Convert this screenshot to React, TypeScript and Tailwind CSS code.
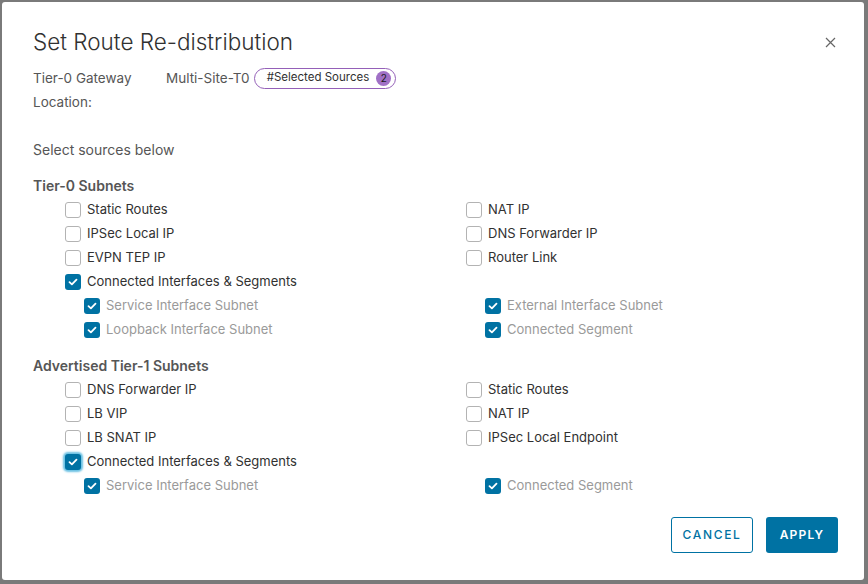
import React from 'react';

type Item = { label: string; checked?: boolean; sub?: boolean; focus?: boolean };

function Check({ checked, focus }: { checked?: boolean; focus?: boolean }) {
  if (!checked) {
    return <span className="h-4 w-4 shrink-0 rounded-[3px] border border-[#b3b3b3] bg-white" />;
  }
  return (
    <span
      className={`flex h-4 w-4 shrink-0 items-center justify-center rounded-[3px] bg-[#0072a3] ${
        focus ? 'shadow-[0_0_2px_2px_#6bc1e3]' : ''
      }`}
    >
      <svg width="10" height="8" viewBox="0 0 10 8" fill="none">
        <path d="M1.5 4.2 L3.9 6.4 L8.5 1.6" stroke="white" strokeWidth="1.8" strokeLinecap="round" strokeLinejoin="round" />
      </svg>
    </span>
  );
}

function Row({ item }: { item?: Item }) {
  if (!item) return <div className="h-6" />;
  return (
    <div className={`flex h-6 items-center gap-[6px] ${item.sub ? 'pl-[19px]' : ''}`}>
      <Check checked={item.checked} focus={item.focus} />
      <span className={`text-[13px] ${item.sub ? 'text-[#9a9a9a]' : 'text-[#313131]'}`}>{item.label}</span>
    </div>
  );
}

function Group({ title, left, right }: { title: string; left: (Item | undefined)[]; right: (Item | undefined)[] }) {
  return (
    <div>
      <div className="h-6 leading-6 text-[14px] font-semibold text-[#565656]">{title}</div>
      <div className="grid grid-cols-[401px_1fr] pl-[32px]">
        <div>
          {left.map((it, i) => (
            <Row key={i} item={it} />
          ))}
        </div>
        <div>
          {right.map((it, i) => (
            <Row key={i} item={it} />
          ))}
        </div>
      </div>
    </div>
  );
}

export default function App() {
  return (
    <div className="h-[584px] w-[868px] bg-[#7a7a7a] pl-[2px] pt-[2px]" style={{ fontFamily: 'Inter, "Noto Sans", sans-serif' }}>
      <div className="flex h-[578px] w-[862px] flex-col rounded-[3px] bg-white px-[31px] pt-6">
        <div className="flex h-8 items-center justify-between">
          <h1 className="text-[22.5px] font-light text-[#313131]">Set Route Re-distribution</h1>
          <svg width="11" height="11" viewBox="0 0 11 11" className="mr-[-3px]">
            <path d="M1 1 L10 10 M10 1 L1 10" stroke="#666" strokeWidth="1.2" />
          </svg>
        </div>
        <div className="mt-2 text-[13.5px] text-[#565656]">
          <div className="flex h-6 items-center">
            <span className="w-[133px]">Tier-0 Gateway</span>
            <span>Multi-Site-T0</span>
            <span className="ml-1 flex h-[21px] items-center gap-[7px] rounded-full border border-[#9460b8] pl-[12px] pr-[4px]">
              <span className="text-[11.5px] text-[#313131]">#Selected Sources</span>
              <span className="flex h-[15px] w-[15px] items-center justify-center rounded-full bg-[#a070c6] text-[10px] text-[#1b1b1b]">
                2
              </span>
            </span>
          </div>
          <div className="flex h-6 items-center">Location:</div>
        </div>
        <div className="mt-6 h-6 leading-6 text-[14px] text-[#565656]">Select sources below</div>
        <div className="mt-3">
          <Group
            title="Tier-0 Subnets"
            left={[
              { label: 'Static Routes' },
              { label: 'IPSec Local IP' },
              { label: 'EVPN TEP IP' },
              { label: 'Connected Interfaces & Segments', checked: true },
              { label: 'Service Interface Subnet', checked: true, sub: true },
              { label: 'Loopback Interface Subnet', checked: true, sub: true },
            ]}
            right={[
              { label: 'NAT IP' },
              { label: 'DNS Forwarder IP' },
              { label: 'Router Link' },
              undefined,
              { label: 'External Interface Subnet', checked: true, sub: true },
              { label: 'Connected Segment', checked: true, sub: true },
            ]}
          />
        </div>
        <div className="mt-3">
          <Group
            title="Advertised Tier-1 Subnets"
            left={[
              { label: 'DNS Forwarder IP' },
              { label: 'LB VIP' },
              { label: 'LB SNAT IP' },
              { label: 'Connected Interfaces & Segments', checked: true, focus: true },
              { label: 'Service Interface Subnet', checked: true, sub: true },
            ]}
            right={[
              { label: 'Static Routes' },
              { label: 'NAT IP' },
              { label: 'IPSec Local Endpoint' },
              undefined,
              { label: 'Connected Segment', checked: true, sub: true },
            ]}
          />
        </div>
        <div className="mt-[19px] flex justify-end gap-[13px]">
          <button className="h-9 w-[82px] rounded-[3px] border border-[#0072a3] text-[12px] font-medium tracking-[0.14em] text-[#0072a3]">
            CANCEL
          </button>
          <button className="mr-[-5px] h-9 w-[72px] rounded-[3px] bg-[#0072a3] text-[12px] font-semibold tracking-[0.1em] text-white">
            APPLY
          </button>
        </div>
      </div>
    </div>
  );
}
